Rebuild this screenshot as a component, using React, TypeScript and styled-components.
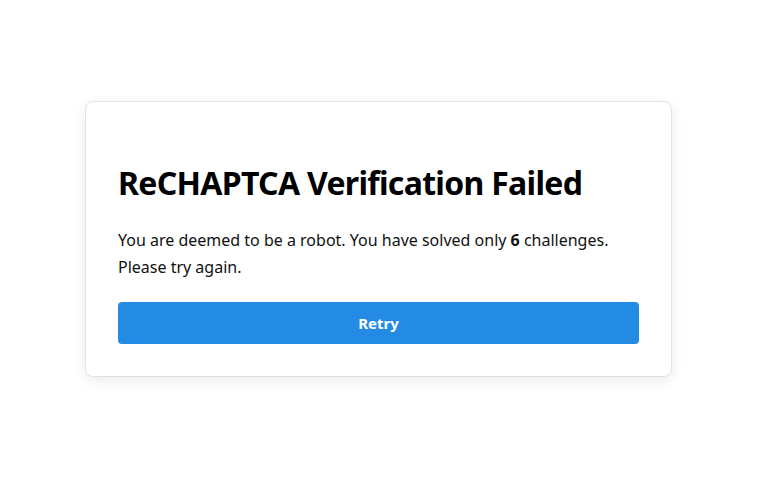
import styled, { createGlobalStyle } from "styled-components";

const GlobalStyle = createGlobalStyle`
  html, body {
    margin: 0;
    padding: 0;
    background: #ffffff;
  }
  body {
    font-family: "Noto Sans", "Open Sans", Arial, sans-serif;
    color: #111111;
  }
`;

const Page = styled.div`
  box-sizing: border-box;
  width: 769px;
  height: 477px;
  padding-left: 85px;
  display: flex;
  align-items: center;
`;

const Card = styled.div`
  box-sizing: border-box;
  width: 587px;
  padding: 32px;
  background: #ffffff;
  border: 1px solid #e2e2e2;
  border-radius: 8px;
  box-shadow: 0 4px 14px rgba(0, 0, 0, 0.08);
`;

const Title = styled.h1`
  margin: 30px 0 25px;
  font-size: 32px;
  line-height: 38px;
  font-weight: 700;
  letter-spacing: -0.7px;
  color: #000000;
`;

const Message = styled.p`
  margin: 0 0 21px;
  font-size: 16px;
  line-height: 27px;
  color: #111111;
`;

const RetryButton = styled.button`
  display: block;
  width: 100%;
  height: 42px;
  border: none;
  border-radius: 4px;
  background: #248be5;
  color: #ffffff;
  font-family: inherit;
  font-size: 15px;
  font-weight: 700;
  cursor: pointer;
`;

export default function App() {
    return (
        <>
            <GlobalStyle />
            <Page>
                <Card>
                    <Title>ReCHAPTCA Verification Failed</Title>
                    <Message>
                        You are deemed to be a robot. You have solved only <b>6</b> challenges.
                        Please try again.
                    </Message>
                    <RetryButton>Retry</RetryButton>
                </Card>
            </Page>
        </>
    );
}
